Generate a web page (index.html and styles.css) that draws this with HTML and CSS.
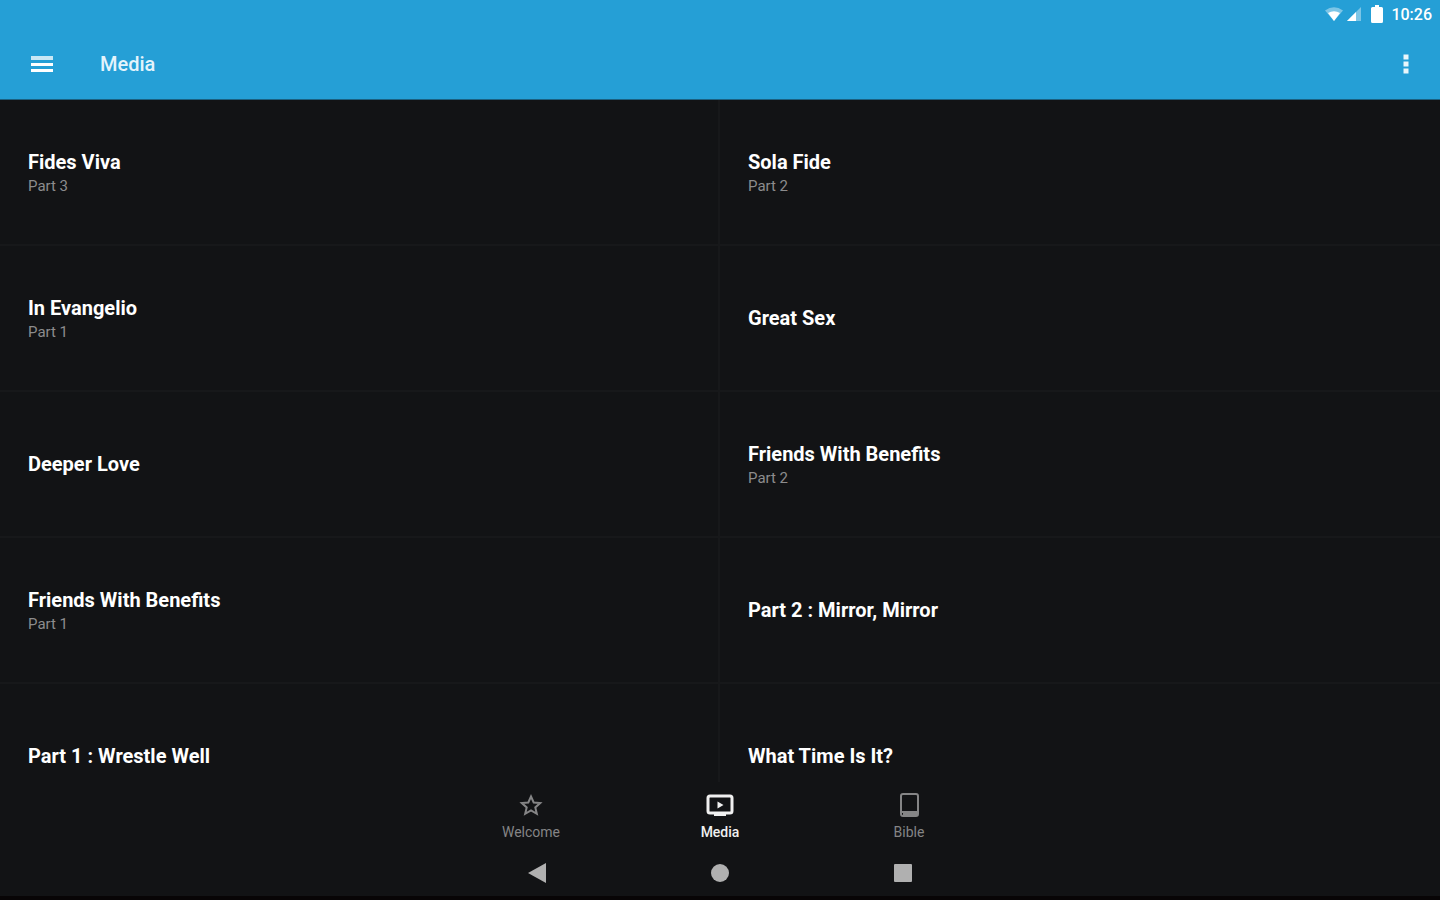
FILE: index.html
```html
<!DOCTYPE html>
<html lang="en">
<head>
    <meta charset="UTF-8">
    <meta name="viewport" content="width=device-width, initial-scale=1.0">
    <title>Media</title>
    <link rel="stylesheet" href="styles.css">
</head>
<body>
    <header>
        <div class="status-bar">
            <svg class="wifi" width="20" height="16" viewBox="0 0 20 16">
                <path d="M1 4.500Q10-2 19 4.500L10 15z" fill="#fff" fill-opacity=".4"/>
                <path d="M4 7Q10 3.500 16 7L10 15z" fill="#fff"/>
            </svg>
            <svg class="signal" width="16" height="16" viewBox="0 0 16 16">
                <path d="M1 15L15 1v14z" fill="#fff" fill-opacity=".4"/>
                <path d="M1 15L10 6v9z" fill="#fff"/>
            </svg>
            <svg class="battery" width="12" height="18" viewBox="0 0 12 18">
                <path d="M4 0h4v2h2.500Q12 2 12 3.500v13Q12 18 10.500 18h-9Q0 18 0 16.500v-13Q0 2 1.500 2H4z" fill="#fff"/>
            </svg>
            <span class="clock">10:26</span>
        </div>
        <div class="toolbar">
            <button type="button" class="icon-button" aria-label="Menu">
                <svg width="22" height="18" viewBox="0 0 22 18">
                    <path d="M0 1h22v4H0z" fill="#fff" fill-opacity=".75"/>
                    <path d="M0 8h22v3H0zM0 14h22v3H0z" fill="#fff"/>
                </svg>
            </button>
            <h1>Media</h1>
            <button type="button" class="icon-button" aria-label="More options">
                <svg width="6" height="20" viewBox="0 0 6 20">
                    <path d="M.5.500h5v5h-5zM.5 7.500h5v5h-5zM.5 14.500h5v5h-5z" fill="#fff" fill-opacity=".9"/>
                </svg>
            </button>
        </div>
    </header>

    <main class="media-grid">
        <a href="#" class="media-item"><h2>Fides Viva</h2><p>Part 3</p></a>
        <a href="#" class="media-item"><h2>Sola Fide</h2><p>Part 2</p></a>
        <a href="#" class="media-item"><h2>In Evangelio</h2><p>Part 1</p></a>
        <a href="#" class="media-item"><h2>Great Sex</h2></a>
        <a href="#" class="media-item"><h2>Deeper Love</h2></a>
        <a href="#" class="media-item"><h2>Friends With Benefits</h2><p>Part 2</p></a>
        <a href="#" class="media-item"><h2>Friends With Benefits</h2><p>Part 1</p></a>
        <a href="#" class="media-item"><h2>Part 2 : Mirror, Mirror</h2></a>
        <a href="#" class="media-item"><h2>Part 1 : Wrestle Well</h2></a>
        <a href="#" class="media-item"><h2>What Time Is It?</h2></a>
    </main>

    <nav class="tabs">
        <a href="#">
            <svg width="28" height="26" viewBox="0 0 28 26" fill="none" stroke="currentColor" stroke-width="2">
                <path d="M14 4.500l2.700 6 6.500.6-4.900 4.300 1.500 6.400-5.800-3.400-5.800 3.400 1.500-6.400-4.900-4.300 6.500-.6z"/>
            </svg>
            <span>Welcome</span>
        </a>
        <a href="#" class="active">
            <svg width="28" height="26" viewBox="0 0 28 26">
                <rect x="2" y="4" width="24" height="17" rx="2" fill="none" stroke="currentColor" stroke-width="3"/>
                <path d="M8 21h12v3H8zM11.500 9.500l6 3.500-6 3.500z" fill="currentColor"/>
            </svg>
            <span>Media</span>
        </a>
        <a href="#">
            <svg width="28" height="26" viewBox="0 0 28 26" fill="none" stroke="currentColor" stroke-width="2">
                <rect x="6" y="2" width="17" height="22" rx="2"/>
                <path d="M6 20h17M8 22h14"/>
            </svg>
            <span>Bible</span>
        </a>
    </nav>

    <div class="system-bar">
        <button type="button" aria-label="Back">
            <svg width="20" height="20" viewBox="0 0 20 20"><path d="M1 10L19 0v20z" fill="currentColor"/></svg>
        </button>
        <button type="button" aria-label="Home">
            <svg width="20" height="20" viewBox="0 0 20 20"><circle cx="10" cy="10" r="9" fill="currentColor"/></svg>
        </button>
        <button type="button" aria-label="Recent apps">
            <svg width="20" height="20" viewBox="0 0 20 20"><rect x="1" y="1" width="18" height="18" rx="1" fill="currentColor"/></svg>
        </button>
    </div>
</body>
</html>
```
FILE: styles.css
```css
* {
    box-sizing: border-box;
}
body {
    font-family: Roboto, "Liberation Sans", sans-serif;
    margin: 0;
    background-color: #121315;
    color: #fff;
    display: flex;
    flex-direction: column;
    height: 100vh;
    border-bottom: 4px solid #080506;
}
h1, h2, p {
    margin: 0;
}
a {
    color: inherit;
    text-decoration: none;
}
button {
    background: none;
    border: none;
    padding: 0;
    color: inherit;
    cursor: pointer;
}
svg {
    display: block;
}
header {
    background: #259fd6;
    flex-shrink: 0;
    border-bottom: 1px solid #1b6080;
}
.status-bar {
    display: flex;
    align-items: center;
    justify-content: flex-end;
    height: 28px;
    padding-right: 8px;
}
.signal {
    margin: 0 9px 0 2px;
}
.clock {
    margin-left: 8px;
    font-size: 16px;
    font-weight: 500;
}
.toolbar {
    display: flex;
    align-items: center;
    height: 71px;
    padding: 0 20px;
}
.toolbar h1 {
    flex-grow: 1;
    margin-left: 36px;
    font-size: 20px;
    font-weight: 500;
    color: #e4f4fc;
}
.icon-button {
    display: flex;
    align-items: center;
    justify-content: center;
    width: 44px;
    height: 44px;
}
.icon-button:last-child {
    width: 28px;
}
.media-grid {
    flex: 1;
    min-height: 0;
    overflow: hidden;
    display: grid;
    grid-template-columns: 1fr 1fr;
    grid-auto-rows: 146px;
}
.media-item {
    display: flex;
    flex-direction: column;
    justify-content: center;
    padding: 0 28px;
    border-bottom: 2px solid #17181a;
}
.media-item:nth-child(odd) {
    border-right: 2px solid #17181a;
}
.media-item h2 {
    font-size: 20px;
    line-height: 28px;
    font-weight: 700;
}
.media-item p {
    font-size: 15px;
    line-height: 20px;
    color: #8c8c8d;
}
.tabs, .system-bar {
    display: flex;
    align-self: center;
    flex-shrink: 0;
}
.tabs {
    height: 68px;
    padding-top: 10px;
}
.tabs a {
    display: flex;
    flex-direction: column;
    align-items: center;
    width: 189px;
    font-size: 14px;
    line-height: 28px;
    color: #858586;
}
.tabs .active {
    color: #f0f0f0;
    font-weight: 500;
}
.system-bar {
    height: 46px;
    color: #b0b0b0;
}
.system-bar button {
    display: flex;
    align-items: center;
    justify-content: center;
    width: 183px;
}
```
